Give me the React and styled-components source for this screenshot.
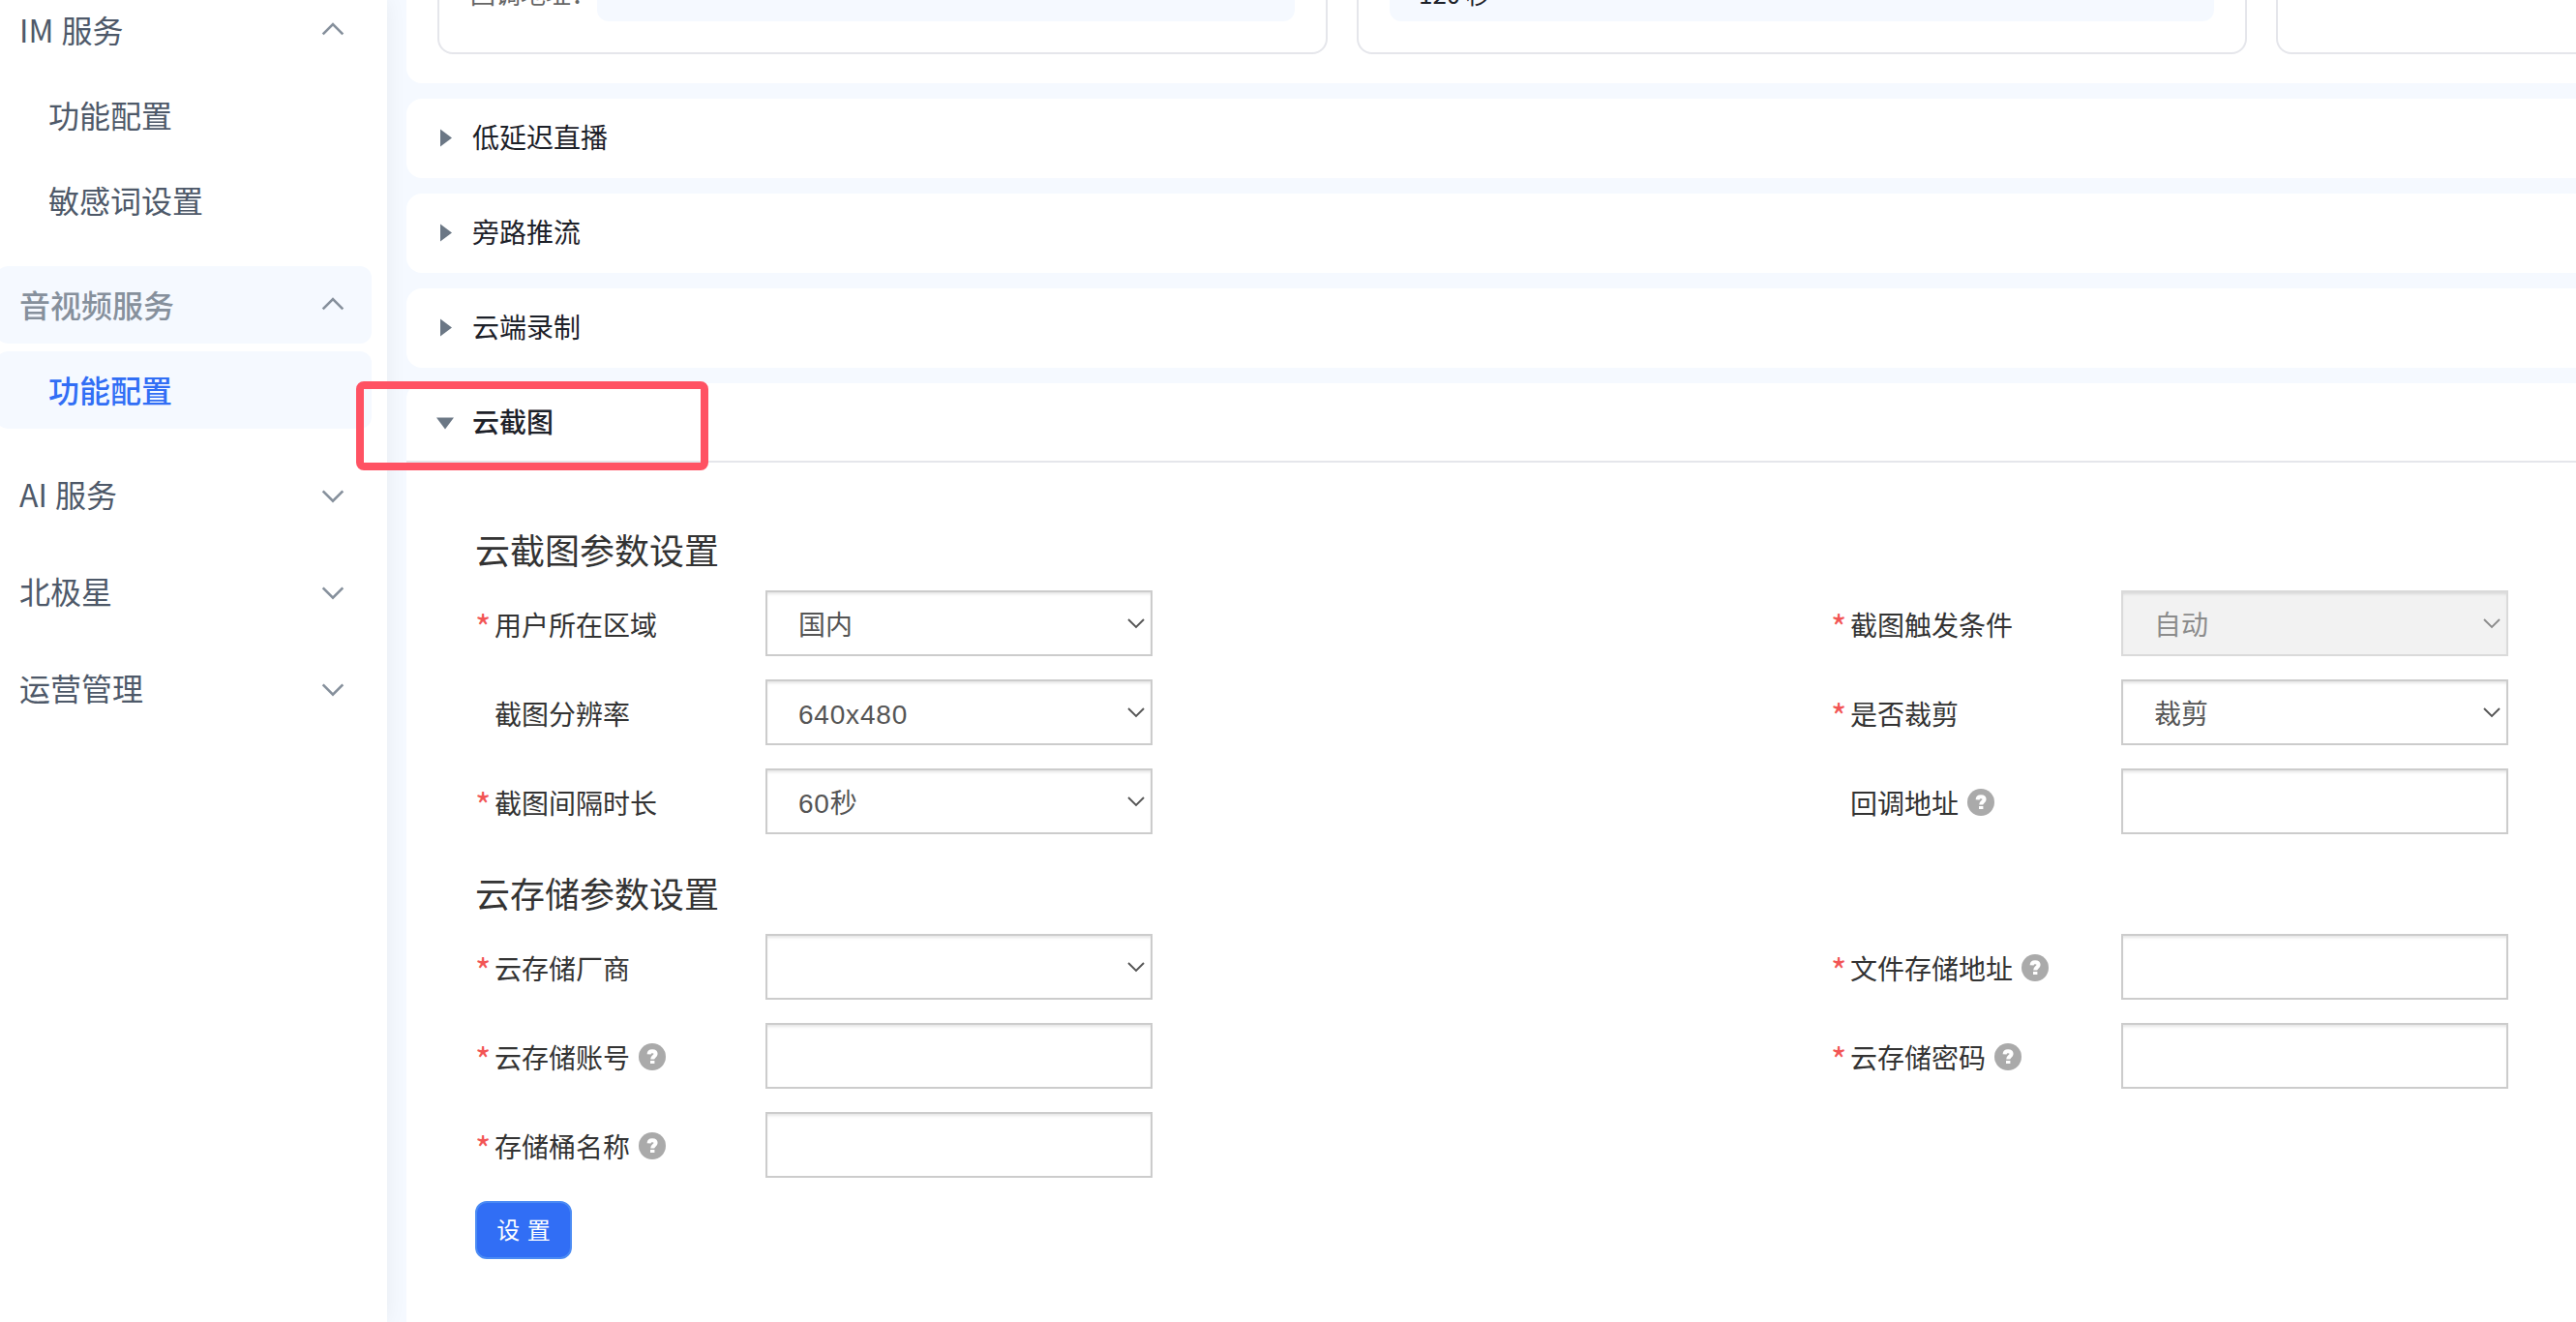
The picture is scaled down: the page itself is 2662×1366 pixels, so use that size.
import React, { useState } from "react";
import styled, { createGlobalStyle, css } from "styled-components";

const GlobalStyle = createGlobalStyle`
    * {
        box-sizing: border-box;
    }
    body {
        margin: 0;
        overflow: hidden;
        background: #f5f9ff;
        font-family: "Noto Sans CJK SC", sans-serif;
        color: #333333;
    }
`;

const Page = styled.div`
    display: flex;
    width: 100%;
    height: 100vh;
    overflow: hidden;
`;

const Sidebar = styled.nav`
    position: relative;
    z-index: 1;
    flex: none;
    width: 400px;
    height: 100%;
    background: #ffffff;
    box-shadow: 0 0 20px rgba(29, 33, 41, 0.06);
`;

const MenuList = styled.div`
    display: flex;
    flex-direction: column;
    gap: 20px;
    width: 388px;
    margin: -9px 0 0 -4px;
`;

const MenuGroup = styled.div`
    display: flex;
    flex-direction: column;
    gap: 8px;
    padding-bottom: ${props => (props.$open ? "8px" : "0")};
`;

const MenuItem = styled.div`
    display: flex;
    align-items: center;
    justify-content: space-between;
    height: 80px;
    padding: 0 28px 3px ${props => (props.$sub ? "54px" : "24px")};
    border-radius: 12px;
    font-size: 32px;
    line-height: 48px;
    word-spacing: 1px;
    color: #4e5969;
    cursor: pointer;

    ${props =>
        props.$parentActive &&
        css`
            background: #f5f9ff;
            color: #86909c;
            font-weight: 500;
        `}
    ${props =>
        props.$active &&
        css`
            background: #f5f9ff;
            color: #316ef5;
            font-weight: 500;
        `}
`;

const Main = styled.main`
    flex: 1;
    min-width: 0;
    display: flex;
    flex-direction: column;
    gap: 16px;
    padding-left: 20px;
`;

const TopPanel = styled.section`
    flex: none;
    display: flex;
    align-items: flex-end;
    gap: 30px;
    height: 86px;
    padding: 0 0 30px 32px;
    background: #ffffff;
    border-radius: 0 0 0 16px;
    overflow: hidden;
`;

const InfoCard = styled.div`
    flex: none;
    display: flex;
    align-items: flex-end;
    width: 920px;
    height: 120px;
    padding: 0 32px 32px;
    border: 2px solid #e5e6eb;
    border-radius: 16px;
`;

const InfoLabel = styled.div`
    flex: none;
    width: 131px;
    font-size: 26px;
    line-height: 40px;
    margin-bottom: 9px;
    color: #666666;
    white-space: nowrap;
`;

const InfoValue = styled.div`
    flex: 1;
    height: 68px;
    padding: 0 30px;
    border-radius: 12px;
    background: #f5f9ff;
    color: #1d2129;
    font-size: 26px;
    line-height: 78px;
`;

const Section = styled.section`
    flex: ${props => (props.$open ? "1" : "none")};
    background: #ffffff;
    border-radius: 16px 0 0 ${props => (props.$open ? "0" : "16px")};
`;

const SectionHeader = styled.div`
    display: flex;
    align-items: center;
    gap: 17px;
    height: 82px;
    padding: 0 0 5px 29px;
    font-size: 28px;
    line-height: 42px;
    color: #1d2129;
    cursor: pointer;

    ${props =>
        props.$open &&
        css`
            padding-bottom: 3px;
            border-bottom: 2px solid #e5e6eb;
            font-weight: 500;
        `}
`;

const Form = styled.div`
    padding: 69px 0 0 71px;
`;

const FormTitle = styled.h3`
    margin: 0;
    height: 63px;
    font-size: 36px;
    font-weight: 400;
    line-height: 41px;
`;

const FormGrid = styled.div`
    display: grid;
    grid-template-columns: 1401px 700px;
    row-gap: 24px;
    margin-bottom: ${props => props.$bottom}px;
`;

const Field = styled.div`
    display: flex;
    align-items: center;
    height: 68px;
`;

const FieldLabel = styled.div`
    display: flex;
    align-items: center;
    flex: none;
    width: 300px;
    padding-top: 2px;
    font-size: 28px;
    line-height: 42px;
    white-space: nowrap;
`;

const Star = styled.span`
    flex: none;
    width: 20px;
    height: 42px;
    padding-top: 2px;
    font-size: 35px;
    color: #f25555;
`;

const controlStyle = css`
    width: 400px;
    height: 68px;
    border: 2px solid #cccccc;
    background: #ffffff;
    box-shadow: inset 0 3px 3px -1px rgba(0, 0, 0, 0.1);
`;

const SelectBox = styled.div`
    ${controlStyle}
    display: flex;
    align-items: center;
    justify-content: space-between;
    padding: 0 6px 0 32px;
    color: #555555;

    ${props =>
        props.$disabled &&
        css`
            background: #f2f2f2;
            border-color: #dadada;
            color: #8c8c8c;
        `}
`;

const SelectValue = styled.span`
    padding-top: 5px;
    font-family: "Liberation Sans", "Noto Sans CJK SC", sans-serif;
    font-size: 28px;
    line-height: 42px;
    letter-spacing: ${props => (props.$digits ? "0.8px" : "normal")};
`;

const TextInput = styled.input`
    ${controlStyle}
    padding: 0 32px;
    outline: none;
    font-size: 28px;
`;

const HelpIcon = styled.svg`
    width: 28px;
    height: 28px;
    margin-left: 9px;
`;

const SubmitButton = styled.button`
    display: block;
    width: 100px;
    height: 60px;
    padding: 0 0 3px;
    border: 2px solid #4b8bf4;
    border-radius: 12px;
    background: #316ef5;
    color: #ffffff;
    font-family: inherit;
    font-size: 24px;
    line-height: 36px;
    word-spacing: 2px;
    cursor: pointer;
`;

// sits over the sidebar and the section header
const Highlight = styled.div`
    position: absolute;
    z-index: 2;
    left: 368px;
    top: 394px;
    width: 364px;
    height: 92px;
    border: 8px solid #ff5263;
    border-radius: 8px;
    pointer-events: none;
`;

const menus = [
    {
        name: "IM 服务",
        children: [{ name: "功能配置" }, { name: "敏感词设置" }],
    },
    {
        name: "音视频服务",
        active: true,
        children: [{ name: "功能配置", active: true }],
    },
    { name: "AI 服务" },
    { name: "北极星" },
    { name: "运营管理" },
];

const sections = ["低延迟直播", "旁路推流", "云端录制"];

const snapshotFields = [
    { label: "用户所在区域", required: true, type: "select", value: "国内" },
    {
        label: "截图触发条件",
        required: true,
        type: "select",
        value: "自动",
        disabled: true,
    },
    { label: "截图分辨率", type: "select", value: "640x480" },
    { label: "是否裁剪", required: true, type: "select", value: "裁剪" },
    { label: "截图间隔时长", required: true, type: "select", value: "60秒" },
    { label: "回调地址", help: true },
];

const storageFields = [
    { label: "云存储厂商", required: true, type: "select", value: "" },
    { label: "文件存储地址", required: true, help: true },
    { label: "云存储账号", required: true, help: true },
    { label: "云存储密码", required: true, help: true },
    { label: "存储桶名称", required: true, help: true },
];

const MenuArrow = ({ open }) => (
    <svg width="24" height="20" viewBox="0 0 24 20" fill="none">
        <path
            d={open ? "M1.7 15.4 12 5.1 22.3 15.4" : "M1.7 7.4 12 17.7 22.3 7.4"}
            stroke="#86909c"
            strokeWidth="2.6"
        />
    </svg>
);

const Caret = ({ open }) => (
    <svg width="22" height="22" viewBox="0 0 22 22" fill="#6b7785">
        <path d={open ? "M2 7.5H20L11 19.5Z" : "M6 3.5V21.5L18 12.5Z"} />
    </svg>
);

const SelectArrow = ({ disabled }) => (
    <svg width="18" height="12" viewBox="0 0 18 12" fill="none">
        <path
            d="M1 2 9 10 17 2"
            stroke={disabled ? "#8c8c8c" : "#555555"}
            strokeWidth="1.9"
        />
    </svg>
);

const Help = () => (
    <HelpIcon viewBox="0 0 28 28">
        <circle cx="14" cy="14" r="14" fill="#aaaaaa" />
        <path
            d="M10.6 11.4C10.7 9.3 12 8.3 14 8.3C16.2 8.3 17.6 9.3 17.6 11C17.6 13.4 14.2 13.4 14.2 16.6"
            fill="none"
            stroke="#ffffff"
            strokeWidth="4"
        />
        <rect x="12" y="18" width="4.4" height="3" fill="#ffffff" />
    </HelpIcon>
);

const FormField = ({ field }) => (
    <Field>
        <FieldLabel>
            <Star>{field.required ? "*" : ""}</Star>
            {field.label}
            {field.help && <Help />}
        </FieldLabel>
        {field.type === "select" ? (
            <SelectBox $disabled={field.disabled}>
                <SelectValue $digits={/\d/.test(field.value)}>
                    {field.value}
                </SelectValue>
                <SelectArrow disabled={field.disabled} />
            </SelectBox>
        ) : (
            <TextInput />
        )}
    </Field>
);

const App = () => {
    const [snapshotOpen, setSnapshotOpen] = useState(true);

    return (
        <>
            <GlobalStyle />
            <Page>
                <Sidebar>
                    <MenuList>
                        {menus.map(menu => (
                            <MenuGroup key={menu.name} $open={!!menu.children}>
                                <MenuItem $parentActive={menu.active}>
                                    {menu.name}
                                    <MenuArrow open={!!menu.children} />
                                </MenuItem>
                                {menu.children?.map(child => (
                                    <MenuItem
                                        key={child.name}
                                        $sub
                                        $active={child.active}
                                    >
                                        {child.name}
                                    </MenuItem>
                                ))}
                            </MenuGroup>
                        ))}
                    </MenuList>
                </Sidebar>
                <Main>
                    <TopPanel>
                        <InfoCard>
                            <InfoLabel>回调地址：</InfoLabel>
                            <InfoValue />
                        </InfoCard>
                        <InfoCard>
                            <InfoValue>120 秒</InfoValue>
                        </InfoCard>
                        <InfoCard />
                    </TopPanel>
                    {sections.map(name => (
                        <Section key={name}>
                            <SectionHeader>
                                <Caret />
                                {name}
                            </SectionHeader>
                        </Section>
                    ))}
                    <Section $open={snapshotOpen}>
                        <SectionHeader
                            $open={snapshotOpen}
                            onClick={() => setSnapshotOpen(!snapshotOpen)}
                        >
                            <Caret open={snapshotOpen} />
                            云截图
                        </SectionHeader>
                        {snapshotOpen && (
                            <Form>
                                <FormTitle>云截图参数设置</FormTitle>
                                <FormGrid $bottom={40}>
                                    {snapshotFields.map(field => (
                                        <FormField
                                            key={field.label}
                                            field={field}
                                        />
                                    ))}
                                </FormGrid>
                                <FormTitle>云存储参数设置</FormTitle>
                                <FormGrid $bottom={24}>
                                    {storageFields.map(field => (
                                        <FormField
                                            key={field.label}
                                            field={field}
                                        />
                                    ))}
                                </FormGrid>
                                <SubmitButton>设 置</SubmitButton>
                            </Form>
                        )}
                    </Section>
                </Main>
                <Highlight />
            </Page>
        </>
    );
};

export default App;
